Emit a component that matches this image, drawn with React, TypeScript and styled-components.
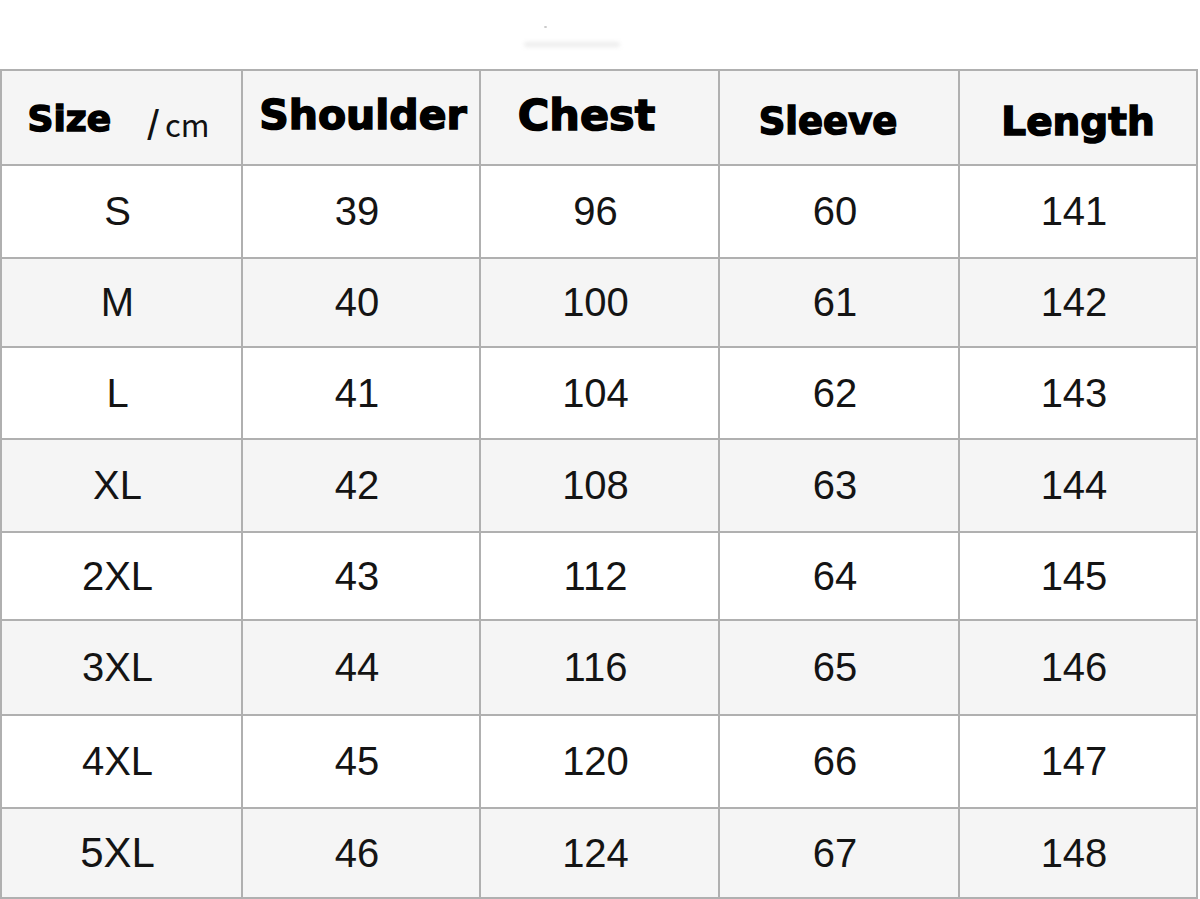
import styled, { createGlobalStyle } from "styled-components";

const GlobalStyle = createGlobalStyle`
  html, body {
    margin: 0;
    padding: 0;
    background: #ffffff;
  }
`;

const lineColor = "#b0b0b0";
const stripeColor = "#f5f5f5";

const Page = styled.div`
  width: 1200px;
  height: 899px;
  overflow: hidden;
  background: #ffffff;
`;

const TopStrip = styled.div`
  height: 69px;
  display: flex;
  flex-direction: column;
  padding-left: 524px;
  box-sizing: border-box;
`;

const Dot = styled.div`
  width: 3px;
  height: 2px;
  margin: 26px 0 0 20px;
  background: #c8c8c8;
  border-radius: 50%;
`;

const Smudge = styled.div`
  width: 96px;
  height: 5px;
  margin-top: 14px;
  background: #ececec;
  border-radius: 3px;
  filter: blur(2px);
`;

const Grid = styled.div`
  display: grid;
  grid-template-columns: 239px 236px 237px 238px 236px;
  grid-template-rows: 93px 91px 87px 90px 91px 86px 93px 91px 88px;
  gap: 2px;
  padding: 2px;
  width: 1198px;
  box-sizing: border-box;
  background: ${lineColor};
`;

const HeadCell = styled.div<{ $size: number; $dx?: number; $dy?: number }>`
  display: flex;
  align-items: center;
  justify-content: center;
  background: ${stripeColor};
  font-family: "DejaVu Sans", "Liberation Sans", sans-serif;
  font-weight: 700;
  font-size: ${(p) => p.$size}px;
  line-height: 1;
  color: #000000;
  -webkit-text-stroke: 1.5px #000000;
  padding-left: ${(p) => (p.$dx && p.$dx > 0 ? p.$dx * 2 : 0)}px;
  padding-right: ${(p) => (p.$dx && p.$dx < 0 ? -p.$dx * 2 : 0)}px;
  padding-top: ${(p) => (p.$dy && p.$dy > 0 ? p.$dy * 2 : 0)}px;
  padding-bottom: ${(p) => (p.$dy && p.$dy < 0 ? -p.$dy * 2 : 0)}px;
`;

const Unit = styled.span`
  display: inline-flex;
  align-items: baseline;
  margin-left: 36px;
  transform: translateY(4px);
  font-family: "Noto Sans CJK SC", "Liberation Sans", sans-serif;
  font-weight: 400;
  font-size: 31px;
  -webkit-text-stroke-width: 0;
  color: #111111;
`;

const Slash = styled.span`
  font-family: "Liberation Sans", sans-serif;
  font-weight: 400;
  font-size: 42px;
  margin-right: 6px;
  -webkit-text-stroke-width: 0;
  transform: translateY(3px);
  display: inline-block;
`;

const Cell = styled.div<{ $striped: boolean; $size?: number }>`
  display: flex;
  align-items: center;
  justify-content: center;
  padding-right: 8px;
  background: ${(p) => (p.$striped ? stripeColor : "#ffffff")};
  font-family: "Liberation Sans", Arial, sans-serif;
  font-size: ${(p) => p.$size ?? 40}px;
  color: #141414;
`;

const rows: [string, number, number, number, number][] = [
  ["S", 39, 96, 60, 141],
  ["M", 40, 100, 61, 142],
  ["L", 41, 104, 62, 143],
  ["XL", 42, 108, 63, 144],
  ["2XL", 43, 112, 64, 145],
  ["3XL", 44, 116, 65, 146],
  ["4XL", 45, 120, 66, 147],
  ["5XL", 46, 124, 67, 148],
];

const App = () => {
  return (
    <Page>
      <GlobalStyle />
      <TopStrip>
        <Dot />
        <Smudge />
      </TopStrip>
      <Grid>
        <HeadCell $size={36} $dx={-3} $dy={1}>
          Size
          <Unit>
            <Slash>/</Slash>cm
          </Unit>
        </HeadCell>
        <HeadCell $size={41} $dx={2} $dy={-2}>Shoulder</HeadCell>
        <HeadCell $size={43} $dx={-13} $dy={-2}>Chest</HeadCell>
        <HeadCell $size={37} $dx={-11} $dy={4}>Sleeve</HeadCell>
        <HeadCell $size={39} $dy={4}>Length</HeadCell>
        {rows.map((row, i) =>
          row.map((value, j) => (
            <Cell
              key={`${i}-${j}`}
              $striped={i % 2 === 1}
              $size={j === 0 && i === 7 ? 42 : 40}
            >
              {value}
            </Cell>
          ))
        )}
      </Grid>
    </Page>
  );
};

export default App;
